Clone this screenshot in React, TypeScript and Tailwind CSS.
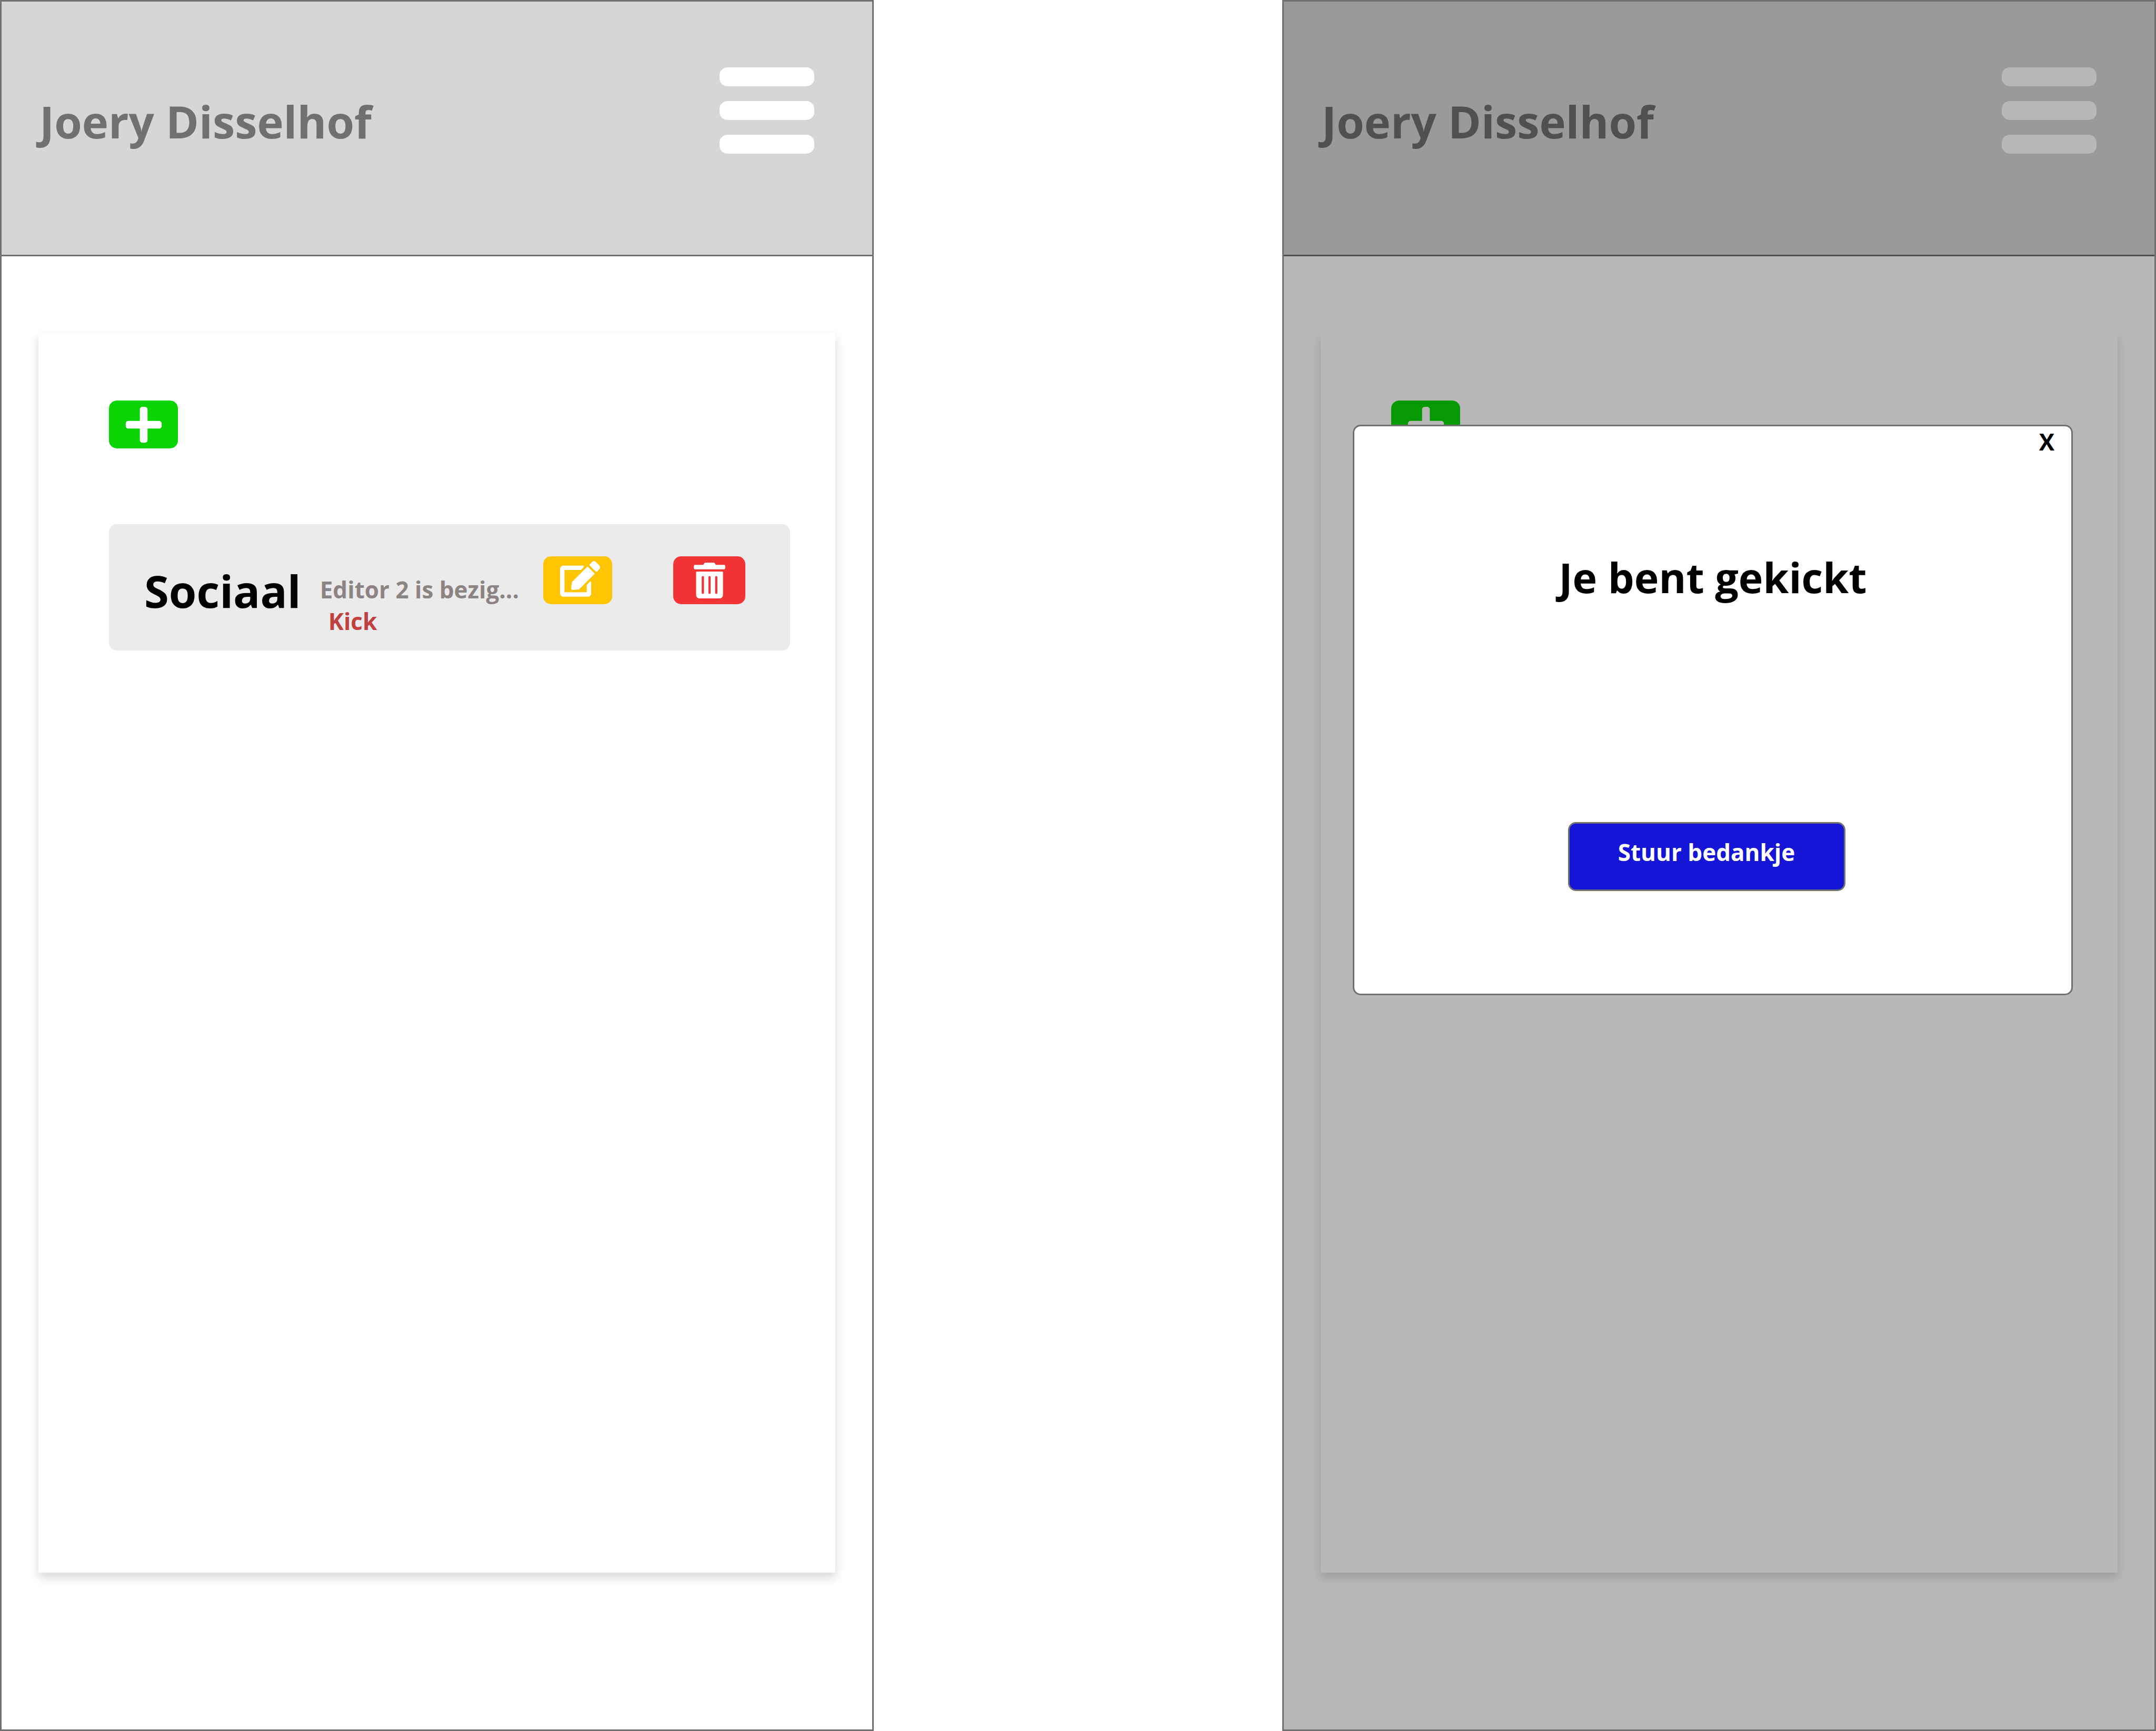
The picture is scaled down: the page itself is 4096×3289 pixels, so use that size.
import type { ReactNode } from "react";
import { FaEdit, FaPlus, FaTrashAlt } from "react-icons/fa";

type PhoneProps = {
  name: string;
  children?: ReactNode;
  overlay?: ReactNode;
};

function Phone({ name, children, overlay }: PhoneProps) {
  return (
    <section className="relative flex min-w-0 flex-1 flex-col border-3 border-[#707070] bg-white">
      <header className="flex items-start justify-between border-b-3 border-[#707070] bg-[#d6d6d6] pt-[125px] pr-[110px] pb-[192px] pl-[72px]">
        <h1 className="mt-[42px] text-[85px] leading-[120px] font-bold text-[#707070]">{name}</h1>
        <button type="button" aria-label="Menu" className="flex w-[180px] flex-col gap-[28px]">
          <span className="h-[36px] rounded-[15px] bg-white" />
          <span className="h-[36px] rounded-[15px] bg-white" />
          <span className="h-[36px] rounded-[15px] bg-white" />
        </button>
      </header>
      <main className="flex flex-1 flex-col px-[70px] pt-[146px] pb-[298px]">
        <div className="flex-1 bg-white pt-[128px] pr-[86px] pl-[134px] shadow-[0_9px_18px_rgba(0,0,0,0.16)]">
          <button
            type="button"
            aria-label="Toevoegen"
            className="flex h-[91px] w-[131px] items-center justify-center rounded-[15px] bg-[#0ad503] text-white"
          >
            <FaPlus size={78} />
          </button>
          {children}
        </div>
      </main>
      {overlay}
    </section>
  );
}

function CategoryRow() {
  return (
    <div className="mt-[144px] flex items-start rounded-[15px] bg-[#ebebeb] pt-[61px] pr-[85px] pb-[26px] pl-[67px]">
      <h2 className="mt-[5px] text-[85px] leading-[120px] font-bold text-black">Sociaal</h2>
      <div className="mt-[33px] ml-[36px] flex flex-col items-start text-[44px] leading-[60px] font-bold">
        <p className="text-[#8c8484]">Editor 2 is bezig...</p>
        <button type="button" className="ml-[16px] text-[#c04040]">
          Kick
        </button>
      </div>
      <div className="ml-auto flex gap-[116px] text-white">
        <button
          type="button"
          aria-label="Bewerken"
          className="flex h-[91px] w-[131px] items-center justify-center rounded-[15px] bg-[#ffc502] pb-[6px] pl-[9px]"
        >
          <FaEdit size={76} />
        </button>
        <button
          type="button"
          aria-label="Verwijderen"
          className="flex h-[91px] w-[137px] items-center justify-center rounded-[15px] bg-[#f33434]"
        >
          <FaTrashAlt size={68} />
        </button>
      </div>
    </div>
  );
}

function KickedDialog() {
  return (
    <div className="absolute -inset-[3px] border-3 border-[#707070] bg-black/[0.28] pt-[804px] pr-[155px] pl-[131px]">
      <div
        role="dialog"
        aria-labelledby="kicked-title"
        className="flex flex-col rounded-[15px] border-3 border-[#707070] bg-white pb-[195px]"
      >
        <button type="button" className="mr-[32px] self-end text-[44px] leading-[58px] font-bold text-black">
          X
        </button>
        <h2
          id="kicked-title"
          className="mt-[174px] text-center text-[79px] leading-[110px] font-bold text-black"
        >
          Je bent gekickt
        </h2>
        <div className="mt-[410px] flex justify-center pr-[24px]">
          <button
            type="button"
            className="w-[527px] rounded-[15px] border-3 border-[#707070] bg-[#1515d7] pt-[24px] pb-[41px] text-[44px] leading-[60px] font-bold text-white"
          >
            Stuur bedankje
          </button>
        </div>
      </div>
    </div>
  );
}

export default function App() {
  return (
    <div className="flex min-h-screen gap-[776px] bg-white font-['Open_Sans','Noto_Sans',sans-serif]">
      <Phone name="Joery Disselhof">
        <CategoryRow />
      </Phone>
      <Phone name="Joery Disselhof" overlay={<KickedDialog />} />
    </div>
  );
}
